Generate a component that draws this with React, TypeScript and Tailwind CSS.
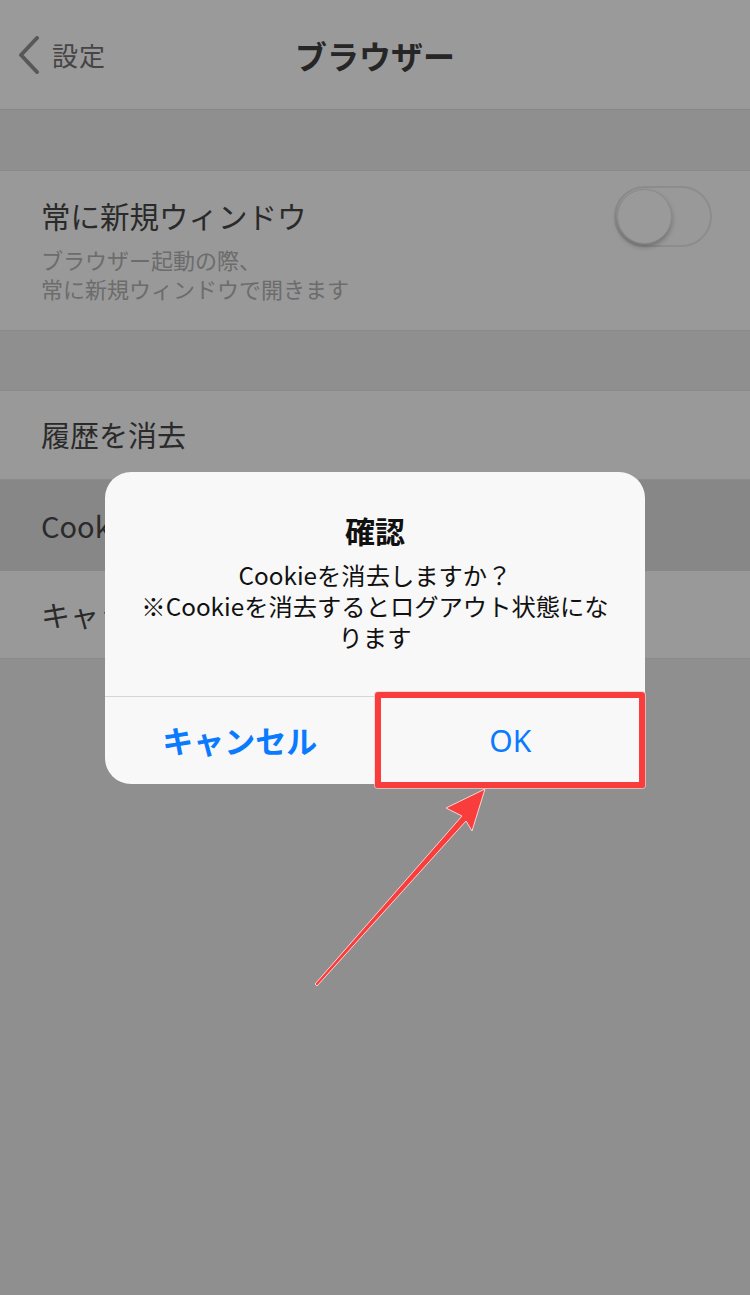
import React from "react";

const jp = { fontFamily: '"Noto Sans CJK JP", "Noto Sans", sans-serif' };

export default function App() {
  return (
    <div className="relative w-[750px] h-[1295px] overflow-hidden bg-[#8f8f8f]" style={jp}>
      {/* Nav bar */}
      <div className="relative h-[110px] bg-[#9a9a9a] border-b border-[#868686] flex items-center">
        <div className="flex items-center pl-[18px] text-[#454545]">
          <svg width="22" height="38" viewBox="0 0 22 38" className="mr-[12px]">
            <path d="M19 2 L3 19 L19 36" fill="none" stroke="#585858" strokeWidth="4" strokeLinecap="round" strokeLinejoin="round" />
          </svg>
          <span className="text-[26px] leading-none tracking-[1px]">設定</span>
        </div>
        <div className="absolute inset-0 flex items-center justify-center pointer-events-none">
          <span className="text-[32px] font-bold text-[#262626] leading-none">ブラウザー</span>
        </div>
      </div>

      <div className="h-[60px]" />

      {/* Toggle row */}
      <div className="bg-[#999999] border-y border-[#8a8a8a] h-[161px] px-[41px] flex items-start justify-between">
        <div className="pt-[25px]">
          <div className="text-[29.5px] leading-[38px] text-[#2a2a2a]">常に新規ウィンドウ</div>
          <div className="mt-[11px] text-[22px] leading-[29px] text-[#6c6c6c]">
            ブラウザー起動の際、
            <br />
            常に新規ウィンドウで開きます
          </div>
        </div>
        <div className="mt-[15px] mr-[-3px] w-[98px] h-[61px] rounded-full border-[2px] border-[#8c8c8c] bg-[#999999] relative">
          <div className="absolute left-[1px] top-[1px] w-[55px] h-[55px] rounded-full bg-[#9a9a9a] border border-[#8a8a8a] shadow-[0_3px_5px_rgba(0,0,0,0.25)]" />
        </div>
      </div>

      <div className="h-[59px]" />

      {/* List rows */}
      <div className="border-y border-[#8a8a8a]">
        <div className="h-[89px] bg-[#999999] px-[41px] flex items-center text-[29px] text-[#2a2a2a] border-b border-[#8c8c8c]">
          履歴を消去
        </div>
        <div className="h-[91px] bg-[#878787] px-[41px] flex items-center text-[29px] text-[#2a2a2a]">
          Cookieを消去
        </div>
        <div className="h-[87px] bg-[#999999] px-[41px] flex items-center text-[29px] text-[#2a2a2a]">
          キャッシュを消去
        </div>
      </div>

      {/* Dialog */}
      <div className="absolute left-[105px] top-[472px] w-[540px] h-[312px] rounded-[26px] rounded-br-none bg-[#f8f8f8] flex flex-col overflow-hidden">
        <div className="flex-1 flex flex-col items-center pt-[38px] text-[#111]">
          <div className="text-[30px] font-bold leading-[40px]">確認</div>
          <div className="mt-[9px] text-[24.3px] leading-[31px] text-center whitespace-nowrap">
            Cookieを消去しますか？
            <br />
            ※Cookieを消去するとログアウト状態にな
            <br />
            ります
          </div>
        </div>
        <div className="h-[88px] border-t border-[#d6d6d6] flex">
          <div className="flex-1 flex items-center justify-center border-r border-[#d6d6d6] text-[#0a7aff] text-[31px] font-bold">
            キャンセル
          </div>
          <div className="flex-1 flex items-center justify-center text-[#0a7aff] text-[30px]" style={{ fontFamily: '"Noto Sans", "Noto Sans CJK JP", sans-serif' }}>
            OK
          </div>
        </div>
      </div>

      {/* Red highlight box */}
      <div className="absolute left-[375px] top-[692px] w-[270px] h-[96px] border-[6px] border-[#f93d3d] rounded-[3px] shadow-[0_0_0_1px_rgba(255,200,200,0.7)]" />

      {/* Arrow */}
      <svg className="absolute left-0 top-0" width="750" height="1295" viewBox="0 0 750 1295">
        <path
          d="M315 984 L462 816 L446 808 L485 789 L472 831 L466 821 L317 986 Z"
          fill="#f93d3d"
          stroke="#ffd0d0"
          strokeWidth="1"
          strokeLinejoin="round"
        />
      </svg>
    </div>
  );
}
